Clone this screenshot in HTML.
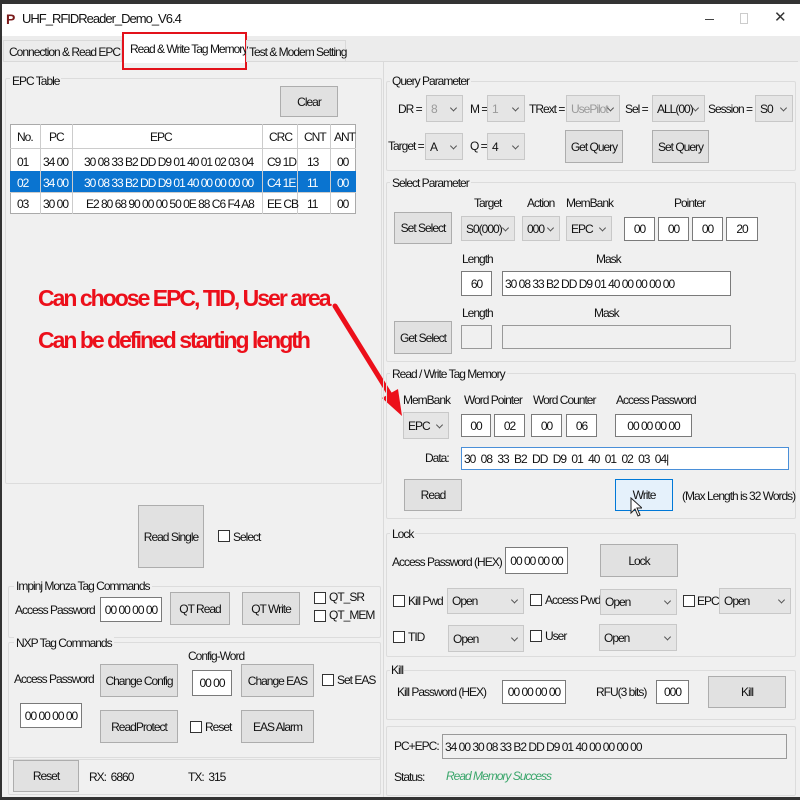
<!DOCTYPE html>
<html><head><meta charset="utf-8">
<style>
*{box-sizing:border-box;margin:0;padding:0}
body{width:800px;height:800px;position:relative;overflow:hidden;background:#f0f0f0;font-family:"Liberation Sans",sans-serif;font-size:12px;color:#111;letter-spacing:-1px}
.a{position:absolute;white-space:nowrap}
.t{position:absolute;white-space:nowrap;line-height:14px}
.btn{position:absolute;background:#e1e1e1;border:1px solid #adadad;display:flex;align-items:center;justify-content:center;white-space:nowrap}
.inp{position:absolute;background:#fff;border:1px solid #7a7a7a;display:flex;align-items:center;justify-content:center;white-space:nowrap}
.sel{position:absolute;background:#e5e5e5;border:1px solid #c8c8c8;display:flex;align-items:center;padding-left:4px;white-space:nowrap}
.sel:after{content:"";position:absolute;right:6px;top:50%;width:4px;height:4px;border-right:1px solid #555;border-bottom:1px solid #555;transform:translateY(-70%) rotate(45deg)}
.dis{color:#9a9a9a}
.grp{position:absolute;border:1px solid #dcdcdc;border-radius:2px}
.cb{position:absolute;width:12px;height:12px;border:1px solid #333;background:#fff}
</style></head><body>
<div class="a" style="left:0;top:0;width:800px;height:4px;background:#333"></div>
<div class="a" style="left:0;top:4px;width:800px;height:32px;background:#fff"></div>
<div class="a" style="left:0;top:0;width:2px;height:800px;background:#333"></div>
<div class="a" style="left:0;top:797px;width:800px;height:3px;background:#333"></div>
<div class="t" style="left:6px;top:12px;font-weight:bold;color:#7a1a1a;font-size:14px">P</div>
<div class="t" style="left:22px;top:12px;font-size:13px">UHF_RFIDReader_Demo_V6.4</div>
<div class="a" style="left:705px;top:19px;width:9px;height:1px;background:#444"></div>
<div class="a" style="left:740px;top:13px;width:8px;height:11px;border:1px solid #ccc"></div>
<div class="t" style="left:774px;top:11px;font-size:15px;color:#333">✕</div>
<div class="a" style="left:2px;top:36px;width:798px;height:26px;background:#ececec"></div>
<div class="a" style="left:3px;top:61px;width:795px;height:1px;background:#d9d9d9"></div>
<div class="a" style="left:3px;top:40px;width:119px;height:22px;border:1px solid #d9d9d9;border-bottom:none"></div>
<div class="t" style="left:9px;top:45px">Connection &amp; Read EPC</div>
<div class="a" style="left:124px;top:35px;width:121px;height:28px;background:#fff"></div>
<div class="a" style="left:122px;top:32px;width:125px;height:38px;border:2px solid #e3121b"></div>
<div class="t" style="left:130px;top:42px">Read &amp; Write Tag Memory</div>
<div class="a" style="left:246px;top:40px;width:100px;height:22px;border:1px solid #d9d9d9;border-bottom:none"></div>
<div class="t" style="left:249px;top:45px">Test &amp; Modem Setting</div>

<div class="grp" style="left:5px;top:78px;width:377px;height:406px"></div>
<div class="t" style="left:10px;top:74px;background:#f0f0f0;padding:0 2px">EPC Table</div>
<div class="btn" style="left:280px;top:86px;width:58px;height:31px">Clear</div>
<div class="a" style="left:10px;top:124px;width:346px;height:90px;background:#fff;border:1px solid #aaa"></div>
<div class="a" style="left:10px;top:171px;width:346px;height:21px;background:#0a74d0"></div>
<div class="a" style="left:10px;top:148px;width:346px;height:1px;background:#ccc"></div>
<div class="a" style="left:10px;top:192px;width:346px;height:1px;background:#ccc"></div>
<div class="a" style="left:40px;top:124px;width:1px;height:90px;background:#ccc"></div>
<div class="a" style="left:72px;top:124px;width:1px;height:90px;background:#ccc"></div>
<div class="a" style="left:262px;top:124px;width:1px;height:90px;background:#ccc"></div>
<div class="a" style="left:297px;top:124px;width:1px;height:90px;background:#ccc"></div>
<div class="a" style="left:330px;top:124px;width:1px;height:90px;background:#ccc"></div>
<div class="t" style="left:17px;top:130px">No.</div><div class="t" style="left:49px;top:130px">PC</div><div class="t" style="left:150px;top:130px">EPC</div><div class="t" style="left:269px;top:130px">CRC</div><div class="t" style="left:304px;top:130px">CNT</div><div class="t" style="left:334px;top:130px">ANT</div>
<div class="t" style="left:17px;top:155px">01</div><div class="t" style="left:43px;top:155px">34 00</div><div class="t" style="left:84px;top:155px">30 08 33 B2 DD D9 01 40 01 02 03 04</div><div class="t" style="left:267px;top:155px">C9 1D</div><div class="t" style="left:307px;top:155px">13</div><div class="t" style="left:337px;top:155px">00</div>
<div class="t" style="left:17px;top:176px;color:#fff">02</div><div class="t" style="left:43px;top:176px;color:#fff">34 00</div><div class="t" style="left:84px;top:176px;color:#fff">30 08 33 B2 DD D9 01 40 00 00 00 00</div><div class="t" style="left:267px;top:176px;color:#fff">C4 1E</div><div class="t" style="left:307px;top:176px;color:#fff">11</div><div class="t" style="left:337px;top:176px;color:#fff">00</div>
<div class="t" style="left:17px;top:197px">03</div><div class="t" style="left:43px;top:197px">30 00</div><div class="t" style="left:86px;top:197px">E2 80 68 90 00 00 50 0E 88 C6 F4 A8</div><div class="t" style="left:267px;top:197px">EE CB</div><div class="t" style="left:307px;top:197px">11</div><div class="t" style="left:337px;top:197px">00</div>

<div class="t" style="left:38px;top:285px;font-size:23px;line-height:27px;font-weight:bold;color:#ec0f1a;letter-spacing:-2px">Can choose EPC, TID, User area</div>
<div class="t" style="left:38px;top:327px;font-size:23px;line-height:27px;font-weight:bold;color:#ec0f1a;letter-spacing:-2px">Can be defined starting length</div>
<svg class="a" style="left:0;top:0" width="800" height="800"><line x1="335" y1="306" x2="392" y2="398" stroke="#ec0f1a" stroke-width="5" stroke-linecap="round"/><polygon points="402,416 382,398 398,389" fill="#ec0f1a"/></svg>

<div class="btn" style="left:138px;top:505px;width:66px;height:63px">Read Single</div>
<div class="cb" style="left:218px;top:530px"></div><div class="t" style="left:233px;top:530px">Select</div>

<div class="grp" style="left:8px;top:586px;width:373px;height:52px"></div>
<div class="t" style="left:14px;top:579px;background:#f0f0f0;padding:0 2px">Impinj Monza Tag Commands</div>
<div class="t" style="left:15px;top:603px">Access Password</div>
<div class="inp" style="left:100px;top:597px;width:62px;height:25px">00 00 00 00</div>
<div class="btn" style="left:170px;top:592px;width:60px;height:33px">QT Read</div>
<div class="btn" style="left:242px;top:592px;width:58px;height:33px">QT Write</div>
<div class="cb" style="left:314px;top:592px"></div><div class="t" style="left:329px;top:590px">QT_SR</div>
<div class="cb" style="left:314px;top:610px"></div><div class="t" style="left:329px;top:608px">QT_MEM</div>

<div class="grp" style="left:8px;top:642px;width:373px;height:118px"></div>
<div class="t" style="left:14px;top:636px;background:#f0f0f0;padding:0 2px">NXP Tag Commands</div>
<div class="t" style="left:188px;top:649px">Config-Word</div>
<div class="t" style="left:14px;top:672px">Access Password</div>
<div class="btn" style="left:100px;top:664px;width:78px;height:33px">Change Config</div>
<div class="inp" style="left:192px;top:670px;width:40px;height:26px">00 00</div>
<div class="btn" style="left:241px;top:664px;width:73px;height:33px">Change EAS</div>
<div class="cb" style="left:322px;top:674px"></div><div class="t" style="left:337px;top:673px">Set EAS</div>
<div class="inp" style="left:20px;top:703px;width:62px;height:25px">00 00 00 00</div>
<div class="btn" style="left:100px;top:710px;width:78px;height:33px">ReadProtect</div>
<div class="cb" style="left:190px;top:721px"></div><div class="t" style="left:205px;top:720px">Reset</div>
<div class="btn" style="left:241px;top:710px;width:73px;height:33px">EAS Alarm</div>

<div class="grp" style="left:8px;top:757px;width:373px;height:38px"></div>
<div class="btn" style="left:13px;top:760px;width:66px;height:32px">Reset</div>
<div class="t" style="left:89px;top:770px">RX:&nbsp; 6860</div>
<div class="t" style="left:188px;top:770px">TX:&nbsp; 315</div>

<div class="a" style="left:383px;top:62px;width:1px;height:735px;background:#dadada"></div>

<div class="grp" style="left:386px;top:81px;width:410px;height:90px"></div>
<div class="t" style="left:390px;top:74px;background:#f0f0f0;padding:0 2px">Query Parameter</div>
<div class="t" style="left:398px;top:102px">DR =</div><div class="sel dis" style="left:426px;top:95px;width:37px;height:27px">8</div>
<div class="t" style="left:470px;top:102px">M =</div><div class="sel dis" style="left:487px;top:95px;width:38px;height:27px">1</div>
<div class="t" style="left:529px;top:102px">TRext =</div><div class="sel dis" style="left:566px;top:95px;width:54px;height:27px">UsePilot</div>
<div class="t" style="left:625px;top:102px">Sel =</div><div class="sel" style="left:652px;top:95px;width:53px;height:27px">ALL(00)</div>
<div class="t" style="left:708px;top:102px">Session =</div><div class="sel" style="left:755px;top:95px;width:38px;height:27px">S0</div>
<div class="t" style="left:388px;top:139px">Target =</div><div class="sel" style="left:425px;top:133px;width:38px;height:27px">A</div>
<div class="t" style="left:470px;top:139px">Q =</div><div class="sel" style="left:487px;top:133px;width:38px;height:27px">4</div>
<div class="btn" style="left:565px;top:130px;width:58px;height:33px">Get Query</div>
<div class="btn" style="left:652px;top:130px;width:57px;height:33px">Set Query</div>

<div class="grp" style="left:386px;top:182px;width:410px;height:180px"></div>
<div class="t" style="left:390px;top:176px;background:#f0f0f0;padding:0 2px">Select Parameter</div>
<div class="t" style="left:474px;top:196px">Target</div><div class="t" style="left:527px;top:196px">Action</div><div class="t" style="left:566px;top:196px">MemBank</div><div class="t" style="left:674px;top:196px">Pointer</div>
<div class="btn" style="left:394px;top:212px;width:58px;height:32px">Set Select</div>
<div class="sel" style="left:461px;top:216px;width:54px;height:25px">S0(000)</div>
<div class="sel" style="left:522px;top:216px;width:38px;height:25px">000</div>
<div class="sel" style="left:566px;top:216px;width:46px;height:25px">EPC</div>
<div class="inp" style="left:624px;top:217px;width:31px;height:24px">00</div>
<div class="inp" style="left:658px;top:217px;width:31px;height:24px">00</div>
<div class="inp" style="left:692px;top:217px;width:31px;height:24px">00</div>
<div class="inp" style="left:726px;top:217px;width:32px;height:24px">20</div>
<div class="t" style="left:462px;top:252px">Length</div><div class="t" style="left:596px;top:252px">Mask</div>
<div class="inp" style="left:461px;top:271px;width:31px;height:25px">60</div>
<div class="inp" style="left:502px;top:271px;width:229px;height:25px;justify-content:flex-start;padding-left:2px">30 08 33 B2 DD D9 01 40 00 00 00 00</div>
<div class="t" style="left:462px;top:306px">Length</div><div class="t" style="left:594px;top:306px">Mask</div>
<div class="btn" style="left:394px;top:321px;width:58px;height:33px">Get Select</div>
<div class="inp" style="left:461px;top:325px;width:31px;height:24px;background:#f0f0f0;border-color:#999"></div>
<div class="inp" style="left:502px;top:325px;width:229px;height:24px;background:#f0f0f0;border-color:#999"></div>

<div class="grp" style="left:386px;top:373px;width:410px;height:146px"></div>
<div class="t" style="left:390px;top:367px;background:#f0f0f0;padding:0 2px">Read / Write Tag Memory</div>
<div class="t" style="left:403px;top:393px">MemBank</div><div class="t" style="left:464px;top:393px">Word Pointer</div><div class="t" style="left:533px;top:393px">Word Counter</div><div class="t" style="left:616px;top:393px">Access Password</div>
<div class="sel" style="left:403px;top:412px;width:46px;height:27px">EPC</div>
<div class="inp" style="left:461px;top:414px;width:30px;height:23px">00</div>
<div class="inp" style="left:494px;top:414px;width:31px;height:23px">02</div>
<div class="inp" style="left:531px;top:414px;width:31px;height:23px">00</div>
<div class="inp" style="left:566px;top:414px;width:31px;height:23px">06</div>
<div class="inp" style="left:615px;top:414px;width:77px;height:23px">00 00 00 00</div>
<div class="t" style="left:425px;top:451px">Data:</div>
<div class="inp" style="left:461px;top:447px;width:328px;height:23px;border-color:#4a8fd8;justify-content:flex-start;padding-left:2px;word-spacing:3px">30 08 33 B2 DD D9 01 40 01 02 03 04|</div>
<div class="btn" style="left:404px;top:479px;width:58px;height:32px">Read</div>
<div class="btn" style="left:615px;top:479px;width:58px;height:32px;background:#e5f1fb;border-color:#0078d7">Write</div>
<div class="t" style="left:682px;top:489px">(Max Length is 32 Words)</div>
<svg class="a" style="left:630px;top:497px" width="12" height="20"><path d="M1 1 L1 16 L5 12 L8 19 L10 18 L7 11 L12 11 Z" fill="#fff" stroke="#222"/></svg>

<div class="grp" style="left:386px;top:533px;width:410px;height:124px"></div>
<div class="t" style="left:390px;top:527px;background:#f0f0f0;padding:0 2px">Lock</div>
<div class="t" style="left:392px;top:555px">Access Password (HEX)</div>
<div class="inp" style="left:505px;top:547px;width:63px;height:27px">00 00 00 00</div>
<div class="btn" style="left:600px;top:544px;width:78px;height:33px">Lock</div>
<div class="cb" style="left:393px;top:595px"></div><div class="t" style="left:408px;top:594px">Kill Pwd</div>
<div class="sel" style="left:447px;top:588px;width:77px;height:26px">Open</div>
<div class="cb" style="left:530px;top:594px"></div><div class="t" style="left:545px;top:593px">Access Pwd</div>
<div class="sel" style="left:600px;top:589px;width:77px;height:26px">Open</div>
<div class="cb" style="left:683px;top:595px"></div><div class="t" style="left:697px;top:594px">EPC</div>
<div class="sel" style="left:719px;top:588px;width:72px;height:26px">Open</div>
<div class="cb" style="left:393px;top:631px"></div><div class="t" style="left:408px;top:630px">TID</div>
<div class="sel" style="left:448px;top:625px;width:76px;height:27px">Open</div>
<div class="cb" style="left:530px;top:630px"></div><div class="t" style="left:545px;top:629px">User</div>
<div class="sel" style="left:599px;top:624px;width:78px;height:27px">Open</div>

<div class="grp" style="left:386px;top:670px;width:410px;height:50px"></div>
<div class="t" style="left:390px;top:663px;background:#f0f0f0;padding:0 1px">Kill</div>
<div class="t" style="left:397px;top:685px">Kill Password (HEX)</div>
<div class="inp" style="left:502px;top:680px;width:64px;height:24px">00 00 00 00</div>
<div class="t" style="left:596px;top:685px">RFU(3 bits)</div>
<div class="inp" style="left:656px;top:680px;width:33px;height:24px">000</div>
<div class="btn" style="left:708px;top:676px;width:78px;height:32px">Kill</div>

<div class="grp" style="left:386px;top:726px;width:410px;height:70px"></div>
<div class="t" style="left:394px;top:739px">PC+EPC:</div>
<div class="inp" style="left:442px;top:734px;width:345px;height:25px;background:#f0f0f0;border-color:#999;justify-content:flex-start;padding-left:2px">34 00 30 08 33 B2 DD D9 01 40 00 00 00 00</div>
<div class="t" style="left:394px;top:770px">Status:</div>
<div class="t" style="left:446px;top:769px;color:#3aa66b;font-style:italic">Read Memory Success</div>
</body></html>
